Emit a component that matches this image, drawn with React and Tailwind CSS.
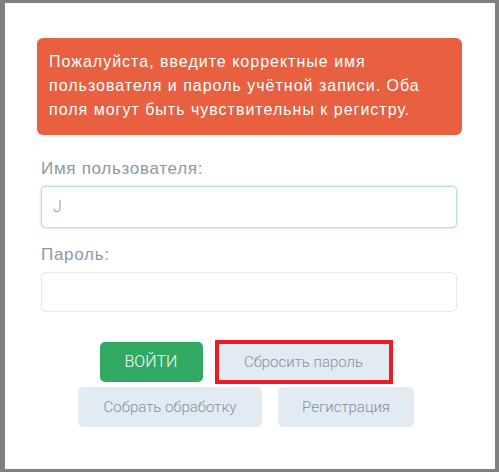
// Login form with validation error alert

export default function App() {
  return (
    <div className="w-[499px] h-[472px] bg-[#808080] pl-[5px] pr-[4px] pt-[3px] pb-[3px]">
      <div className="h-full bg-white pl-[36px] pr-[38px] pt-[35px]">
        {/* ── Alert ── */}
        <div
          className="-ml-[4px] -mr-[5px] rounded-[6px] bg-[#e8603f] px-[12px] pt-[12px] pb-[13px] text-[16px] leading-[24px] tracking-[1px] text-white"
          style={{ fontFamily: '"Liberation Sans", Arial, sans-serif' }}
        >
          Пожалуйста, введите корректные имя пользователя и пароль учётной записи. Оба поля могут быть чувствительны к регистру.
        </div>

        {/* ── Fields ── */}
        <div style={{ fontFamily: '"Liberation Sans", Arial, sans-serif' }}>
          <label className="mt-[22px] block text-[17px] leading-[24px] tracking-[0.7px] text-[#8c99a6]">
            Имя пользователя:
          </label>
          <div className="mt-[5px] flex h-[42px] items-center rounded-[5px] border border-[#b5e4c6] bg-white px-[11px] shadow-[0_0_3px_rgba(49,169,98,0.35)]">
            <span className="text-[16px] font-light text-[#8a96a3]" style={{ fontFamily: 'Roboto, sans-serif' }}>
              J
            </span>
          </div>

          <label className="mt-[15px] block text-[17px] leading-[24px] tracking-[0.7px] text-[#8c99a6]">
            Пароль:
          </label>
          <div className="mt-[5px] h-[40px] rounded-[5px] border border-[#e9e9e9] bg-white" />
        </div>

        {/* ── Buttons ── */}
        <div
          className="mt-[28px] flex flex-col items-center gap-[3px] pr-[6px]"
          style={{ fontFamily: 'Roboto, sans-serif' }}
        >
          <div className="flex items-center gap-[12px]">
            <button className="flex h-[40px] w-[103px] items-center justify-center rounded-[5px] bg-[#32a962] text-[16px] font-light text-white">
              ВОЙТИ
            </button>
            <div className="border-[4px] border-[#ed1c24]">
              <button className="flex h-[36px] w-[170px] items-center justify-center bg-[#e2eaf2] text-[15px] font-light text-[#8491a3]">
                Сбросить пароль
              </button>
            </div>
          </div>
          <div className="flex items-center gap-[16px]">
            <button className="flex h-[40px] w-[184px] items-center justify-center rounded-[5px] bg-[#e2eaf2] text-[15px] font-light text-[#8491a3]">
              Собрать обработку
            </button>
            <button className="flex h-[40px] w-[136px] items-center justify-center rounded-[5px] bg-[#e2eaf2] text-[15px] font-light text-[#8491a3]">
              Регистрация
            </button>
          </div>
        </div>
      </div>
    </div>
  );
}
